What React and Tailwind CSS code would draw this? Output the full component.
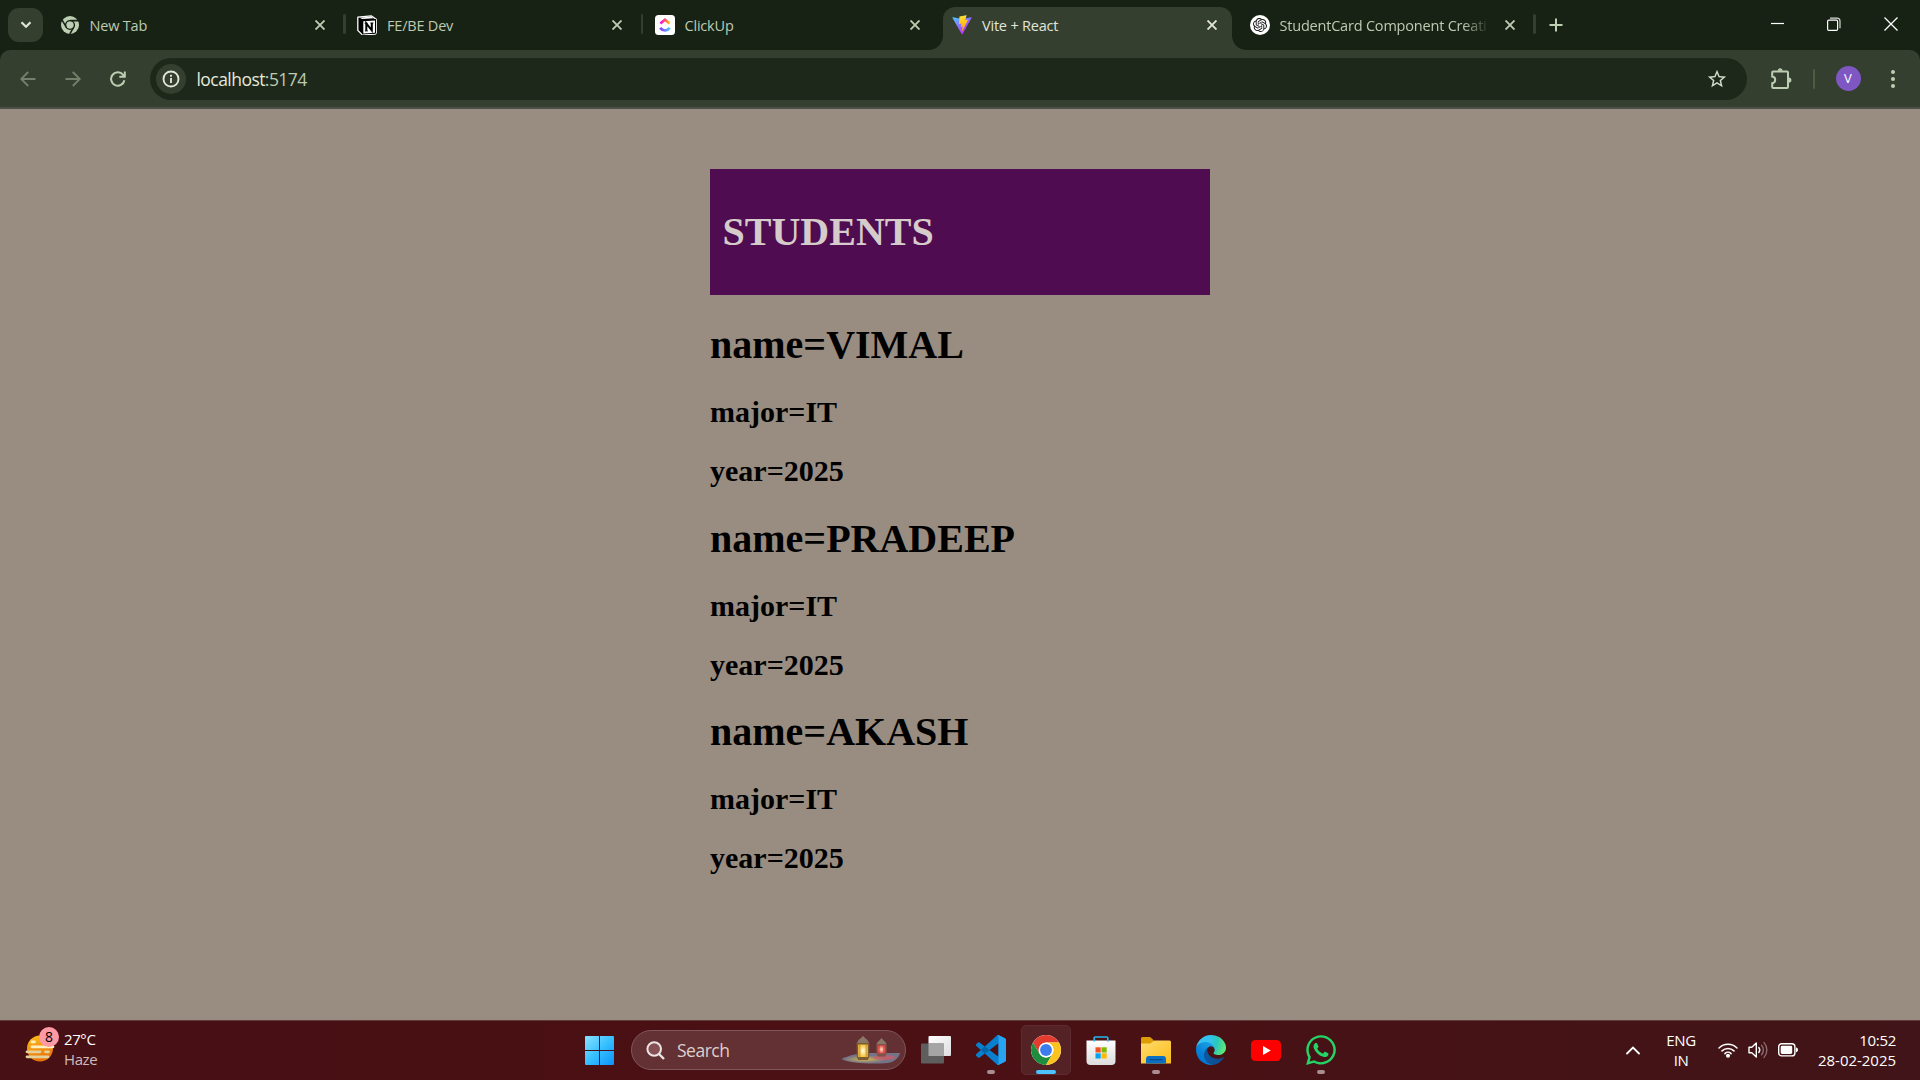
import React from "react";
import { SiOpenai } from "react-icons/si";
import { FaWhatsapp } from "react-icons/fa";

const ChromeMono = () => (
  <svg width="18" height="18" viewBox="0 0 48 48">
    <circle cx="24" cy="24" r="24" fill="#bccfb2" />
    <circle cx="24" cy="24" r="11.5" fill="none" stroke="#182214" strokeWidth="4.2" />
    <path d="M24 12.400h22M14 29.800 3 10.800M34 29.800 23.500 48" stroke="#182214" strokeWidth="4.200" />
    <circle cx="24" cy="24" r="9.200" fill="#bccfb2" />
  </svg>
);

const Notion = () => (
  <svg width="20" height="20" viewBox="0 0 20 20">
    <path d="M.8 2.200 14.200.8l5 3.400v13.800l-1.200 1.200-12.800.5L.8 15.400z" fill="#000" stroke="#fff" strokeWidth="1.300" strokeLinejoin="round" />
    <path d="M5.200 4.800 19 4v14.500l-13.800.9z" fill="#000" />
    <path d="M2.400 2.700 14 1.600l2.800 1.700-11.400.7z" fill="#fff" />
    <path d="M6.300 6.200 18 5.500v12.200l-11.700.7z" fill="#fff" />
    <path d="M9.300 15.800V8.400l5.500 7V8" fill="none" stroke="#000" strokeWidth="2" />
    <path d="M7.700 8.200h2.800M13.400 8h3M7.900 15.900h2.900" stroke="#000" strokeWidth="1" />
  </svg>
);

const ClickUp = () => (
  <svg width="20" height="20" viewBox="0 0 20 20">
    <defs>
      <linearGradient id="cuA" x1="0" x2="1"><stop stopColor="#ff02f0" /><stop offset=".5" stopColor="#ff4f6e" /><stop offset="1" stopColor="#ffc800" /></linearGradient>
      <linearGradient id="cuB" x1="0" x2="1"><stop stopColor="#8930fd" /><stop offset="1" stopColor="#49ccf9" /></linearGradient>
    </defs>
    <rect width="20" height="20" rx="3.5" fill="#fff" />
    <path d="M5.4 8.6 10 4.7l4.6 3.9" fill="none" stroke="url(#cuA)" strokeWidth="2.6" />
    <path d="M5.2 12.9c2.6 3.4 7 3.4 9.6 0" fill="none" stroke="url(#cuB)" strokeWidth="2.6" />
  </svg>
);

const Vite = () => (
  <svg width="20" height="20" viewBox="0 0 410 404">
    <defs>
      <linearGradient id="vA" x1="6" y1="33" x2="235" y2="344" gradientUnits="userSpaceOnUse"><stop stopColor="#41D1FF" /><stop offset="1" stopColor="#BD34FE" /></linearGradient>
      <linearGradient id="vB" x1="194.651" y1="8.818" x2="236.076" y2="292.989" gradientUnits="userSpaceOnUse"><stop stopColor="#FFEA83" /><stop offset=".0833" stopColor="#FFDD35" /><stop offset="1" stopColor="#FFA800" /></linearGradient>
    </defs>
    <path fill="url(#vA)" d="M399.641 59.5246L215.643 388.545C211.844 395.338 202.084 395.378 198.228 388.618L10.5817 59.5563C6.38087 52.1896 12.6802 43.2665 21.0281 44.7586L205.223 77.6824C206.398 77.8924 207.601 77.8904 208.776 77.6763L389.119 44.8058C397.439 43.2894 403.768 52.1434 399.641 59.5246Z" />
    <path fill="url(#vB)" d="M292.965 1.5744L156.801 28.2552C154.563 28.6937 152.906 30.5903 152.771 32.8664L144.395 174.33C144.198 177.662 147.258 180.248 150.51 179.498L188.42 170.749C191.967 169.931 195.172 173.055 194.443 176.622L183.18 231.775C182.422 235.487 185.907 238.661 189.532 237.56L212.947 230.446C216.577 229.344 220.065 232.527 219.297 236.242L201.398 322.875C200.278 328.294 207.486 331.249 210.492 326.603L212.5 323.5L323.454 102.072C325.312 98.3645 322.108 94.137 318.036 94.9228L279.014 102.454C275.347 103.161 272.227 99.746 273.262 96.1583L298.731 7.86689C299.767 4.27314 296.636 0.855181 292.965 1.5744Z" />
  </svg>
);

const OpenAi = () => (
  <span className="flex h-5 w-5 items-center justify-center rounded-full bg-white">
    <SiOpenai size={14} color="#111" />
  </span>
);

const tabs = [
  { title: "New Tab", icon: <ChromeMono />, sep: true },
  { title: "FE/BE Dev", icon: <Notion />, sep: true },
  { title: "ClickUp", icon: <ClickUp /> },
  { title: "Vite + React", icon: <Vite />, active: true },
  { title: "StudentCard Component Creati", icon: <OpenAi />, sep: true, fade: true },
];

function Tab({ title, icon, active, sep, fade }) {
  return (
    <div className="flex h-[43px] w-[297.5px] shrink-0">
      <div className={`relative flex h-full w-[289px] items-center rounded-t-[12px] pb-[8px] pl-[9px] ${active ? "bg-[#343f2f] text-[#e1e5d8]" : "text-[#bccbb2]"}`}>
        {active && (
          <>
            <span className="absolute bottom-0 -left-[14px] h-[14px] w-[14px] bg-[radial-gradient(circle_at_0_0,transparent_13.5px,#343f2f_14.2px)]" />
            <span className="absolute bottom-0 -right-[14px] h-[14px] w-[14px] bg-[radial-gradient(circle_at_100%_0,transparent_13.5px,#343f2f_14.2px)]" />
          </>
        )}
        <span className="flex h-5 w-5 shrink-0 items-center justify-center">{icon}</span>
        <span className={`ml-[10px] w-[210px] pt-[2px] text-[14.5px] leading-5 tracking-[-0.2px] whitespace-nowrap ${fade ? "[mask-image:linear-gradient(to_right,#000_183px,transparent_210px)]" : ""}`}>
          {title}
        </span>
        <svg className="ml-[15px] shrink-0" width="10" height="10" viewBox="0 0 10 10" fill="none" stroke="currentColor" strokeWidth="1.9">
          <path d="M.5.5l9 9M9.5.5l-9 9" />
        </svg>
      </div>
      {sep && <span className="mt-[7px] ml-[3.5px] h-5 w-[2.5px] rounded-full bg-[#343f2f]" />}
    </div>
  );
}

function TabStrip() {
  return (
    <div className="flex h-[50px] bg-[#182214]">
      <div className="mt-2 ml-2 flex h-[34px] w-[35px] items-center justify-center rounded-[11px] bg-[#343f2f]">
        <svg width="12" height="8" viewBox="0 0 12 8" fill="none" stroke="#e1e5d8" strokeWidth="2.2"><path d="M1.5 1.3 6 5.8l4.5-4.5" /></svg>
      </div>
      <div className="mt-[7px] ml-[7.5px] flex">
        {tabs.map((t) => <Tab key={t.title} {...t} />)}
      </div>
      <svg className="mt-[18px] ml-[11px]" width="14" height="14" viewBox="0 0 14 14" stroke="#bccfb2" strokeWidth="2"><path d="M7 .5v13M.5 7h13" /></svg>
      <div className="ml-auto flex pt-[17px] pr-[22px]">
        <svg width="14" height="14" viewBox="0 0 14 14"><path d="M0 6.500h13" stroke="#fff" strokeWidth="1.2" /></svg>
        <svg className="ml-[42px]" width="14" height="14" viewBox="0 0 14 14" fill="none">
          <path d="M3 1.2h7a3 3 0 0 1 3 3v7" stroke="#d5d8d3" strokeWidth="1.2" />
          <rect x=".6" y="3.2" width="10" height="10.2" rx="1.2" stroke="#fff" strokeWidth="1.2" />
        </svg>
        <svg className="ml-[43px]" width="14" height="14" viewBox="0 0 14 14" stroke="#fff" strokeWidth="1.3"><path d="M.5.5l13 13M13.5.5l-13 13" /></svg>
      </div>
    </div>
  );
}

function Toolbar() {
  return (
    <div className="h-[59px] bg-[#182214]">
      <div className="flex h-[59px] items-center rounded-t-[10px] border-b-2 border-[#4a5146] bg-[#343f2f]">
        <div className="ml-[5px] flex w-[45px] justify-center">
          <svg width="16" height="16" viewBox="0 0 16 16" fill="none" stroke="#75806c" strokeWidth="1.8"><path d="M15.5 8H1.5M8.2 1 1.2 8l7 7" /></svg>
        </div>
        <div className="flex w-[45px] justify-center">
          <svg width="16" height="16" viewBox="0 0 16 16" fill="none" stroke="#75806c" strokeWidth="1.8"><path d="M.5 8h14M7.8 1l7 7-7 7" /></svg>
        </div>
        <div className="flex w-[45px] justify-center">
          <svg width="16" height="16" viewBox="0 0 16 16" fill="none" stroke="#bccfb2" strokeWidth="2"><path d="M14.4 9.2A6.7 6.7 0 1 1 13.2 4l1 1.2M14.8.5v5.3H9.3" /></svg>
        </div>
        <div className="ml-[10px] flex h-[42px] w-[1597px] items-center rounded-full bg-[#1e281a] pl-[6px]">
          <div className="flex h-[30px] w-[30px] items-center justify-center rounded-full bg-[#343f2f]">
            <svg width="18" height="18" viewBox="0 0 18 18" fill="none" stroke="#e1e5d8" strokeWidth="1.9"><circle cx="9" cy="9" r="7.5" /><path d="M9 8v5M9 4.8v1.9" /></svg>
          </div>
          <span className="ml-[10.5px] pt-px text-[17.5px] leading-6 tracking-[-0.55px] text-[#e3e8dc]">localhost<span className="text-[#bccbb2]">:5174</span></span>
          <svg className="mr-[19px] ml-auto" width="22" height="22" viewBox="0 0 24 24" fill="#d3dbca">
            <path d="M22 9.24l-7.19-.62L12 2 9.19 8.63 2 9.24l5.46 4.73L5.82 21 12 17.27 18.18 21l-1.63-7.03L22 9.24zM12 15.4l-3.76 2.27 1-4.28-3.32-2.88 4.38-.38L12 6.1l1.71 4.04 4.38.38-3.32 2.88 1 4.28L12 15.4z" />
          </svg>
        </div>
        <div className="ml-[14px] flex w-10 justify-center">
          <svg width="21" height="22" viewBox="0 0 21 22">
            <path d="M2.200 3.500H16a1 1 0 0 1 1 1V19a1 1 0 0 1-1 1H2.200a1 1 0 0 1-1-1v-3.800c4-.4 4-6.300 0-6.700v-4a1 1 0 0 1 1-1z" fill="none" stroke="#bccfb2" strokeWidth="2" />
            <path d="M6.700 2.700a2.500 2.500 0 0 1 5 0zM17.800 9.400a2.600 2.600 0 0 1 0 5.200z" fill="#bccfb2" />
          </svg>
        </div>
        <span className="ml-[11.5px] h-5 w-[2px] rounded-full bg-[#4d5d45]" />
        <span className="ml-[21px] flex h-[25px] w-[25px] items-center justify-center rounded-full bg-[#7e57c2] text-[13px] text-white">V</span>
        <svg className="ml-[29px]" width="6" height="20" viewBox="0 0 6 20" fill="#bccfb2"><circle cx="3" cy="3" r="2" /><circle cx="3" cy="10" r="2" /><circle cx="3" cy="17" r="2" /></svg>
      </div>
    </div>
  );
}

const students = [
  { name: "VIMAL", major: "IT", year: "2025" },
  { name: "PRADEEP", major: "IT", year: "2025" },
  { name: "AKASH", major: "IT", year: "2025" },
];

function Page() {
  return (
    <main className="h-[911px] bg-[#998c80] pt-[60px] font-['Liberation_Serif',serif] font-bold">
      <div className="mx-auto w-[500px] text-black">
        <h1 className="h-[126px] bg-[#500c50] px-[12.5px] pt-[40px] text-[40px] leading-[46px] text-[#d6cbcb]">STUDENTS</h1>
        {students.map((s) => (
          <section key={s.name} className="h-[193.5px] pt-[27px]">
            <h1 className="text-[40px] leading-[46px]">name={s.name}</h1>
            <h2 className="mt-[27px] text-[30px] leading-[34px]">major={s.major}</h2>
            <h2 className="mt-[25px] text-[30px] leading-[34px]">year={s.year}</h2>
          </section>
        ))}
      </div>
    </main>
  );
}

const TaskView = () => (
  <svg width="30" height="28" viewBox="0 0 30 28">
    <defs><linearGradient id="tv" x1="0" x2="1" y2="1"><stop stopColor="#fff" /><stop offset="1" stopColor="#ddd" /></linearGradient></defs>
    <rect x="7.500" y="0" width="22.500" height="20" rx="1" fill="url(#tv)" />
    <rect x="0" y="7.500" width="23" height="20" rx="1" fill="#5e5e5e" />
    <path d="M7.500 7.500H22a1 1 0 0 1 1 1V20H7.500z" fill="#a5a5a5" />
  </svg>
);

const VsCode = () => (
  <svg width="30" height="30" viewBox="0 0 24 24">
    <path fill="#0a7fce" d="M23.15 2.587L18.21.21a1.494 1.494 0 0 0-1.705.29l-9.46 8.63-4.12-3.128a.999.999 0 0 0-1.276.057L.327 7.261A1 1 0 0 0 .326 8.74L3.899 12 .326 15.26a1 1 0 0 0 .001 1.479L1.65 17.94a.999.999 0 0 0 1.276.057l4.12-3.128 9.46 8.63a1.492 1.492 0 0 0 1.704.29l4.942-2.377A1.5 1.5 0 0 0 24 20.06V3.939a1.5 1.5 0 0 0-.85-1.352zm-5.146 14.861L10.826 12l7.178-5.448v10.896z" />
    <path fill="#0065a9" d="M7.045 9.130 10.826 12l-3.780 2.870L3.899 12z" />
    <path fill="#27a5f3" d="M17.100.1c.5.500.904 1 .904 1.400v21c0 .5-.4 1-.904 1.400.4.100.800 0 1.110-.110l4.942-2.377A1.500 1.500 0 0 0 24 20.060V3.939a1.500 1.500 0 0 0-.850-1.352L18.210.210c-.3-.150-.7-.2-1.110-.110z" />
  </svg>
);

const Chrome = () => (
  <svg width="30" height="30" viewBox="0 0 48 48">
    <circle cx="24" cy="24" r="24" fill="#fff" />
    <path fill="#e33b2e" d="M24 12h20.780A24 24 0 0 0 3.220 12L13.610 30 24 12z" />
    <path fill="#1e8e3e" d="M34.390 30 24 48A24 24 0 0 1 3.220 12L13.610 30a12 12 0 0 0 20.780 0z" />
    <path fill="#fcc31e" d="M34.390 30 24 48a24 24 0 0 0 20.780-36H24a12 12 0 0 1 10.390 18z" />
    <circle cx="24" cy="24" r="12" fill="#fff" />
    <circle cx="24" cy="24" r="9.500" fill="#3b7ded" />
  </svg>
);

const Store = () => (
  <svg width="30" height="30" viewBox="0 0 30 30">
    <defs><linearGradient id="st" x2="0" y2="1"><stop stopColor="#fff" /><stop offset="1" stopColor="#dcdcdc" /></linearGradient></defs>
    <path d="M.5 5.500h29V26a4 4 0 0 1-4 4h-21a4 4 0 0 1-4-4z" fill="url(#st)" />
    <path d="M8.200 6.500V3a1 1 0 0 1 1-1h11.600a1 1 0 0 1 1 1v3.500" fill="none" stroke="#22b8ee" strokeWidth="1.700" />
    <path fill="#f25022" d="M9.500 12.300h5.200v5.200H9.500z" /><path fill="#7fba00" d="M15.500 12.300h5.200v5.200h-5.200z" />
    <path fill="#00a4ef" d="M9.500 18.300h5.200v5.200H9.500z" /><path fill="#ffb900" d="M15.500 18.300h5.200v5.200h-5.200z" />
  </svg>
);

const Folder = () => (
  <svg width="30" height="27" viewBox="0 0 30 27">
    <defs><linearGradient id="fo" x2="1" y2="1"><stop stopColor="#ffdc6e" /><stop offset="1" stopColor="#fcbc19" /></linearGradient></defs>
    <path d="M0 1.500A1.500 1.500 0 0 1 1.500 0H9l3.500 3v4H0z" fill="#dd9d06" />
    <path d="M0 6.500h9.500L13 3.500h15.500A1.500 1.500 0 0 1 30 5v21.500H0z" fill="url(#fo)" />
    <path d="M5 26.500V22a3 3 0 0 1 3-3h14a3 3 0 0 1 3 3v4.500z" fill="#0b6fc4" />
    <path d="M8.500 22.700h13" stroke="#0a4a8c" strokeWidth="1.200" />
  </svg>
);

const Edge = () => (
  <svg width="30" height="30" viewBox="0 0 256 256">
    <defs>
      <linearGradient id="eA" x1="58" y1="177" x2="237" y2="177" gradientUnits="userSpaceOnUse"><stop stopColor="#0c59a4" /><stop offset="1" stopColor="#114a8b" /></linearGradient>
      <linearGradient id="eB" x1="152" y1="75" x2="46" y2="220" gradientUnits="userSpaceOnUse"><stop stopColor="#1b9de2" /><stop offset=".3" stopColor="#1595df" /><stop offset=".7" stopColor="#0680d7" /><stop offset="1" stopColor="#0078d4" /></linearGradient>
      <radialGradient id="eC" cx="30" cy="50" r="240" gradientUnits="userSpaceOnUse"><stop stopColor="#35c1f1" /><stop offset=".4" stopColor="#34c1ed" /><stop offset=".65" stopColor="#2ac7bb" /><stop offset="1" stopColor="#66eb6e" /></radialGradient>
    </defs>
    <g transform="translate(-4.630 -4.920)">
      <path fill="url(#eA)" d="M235.68 195.46a93.73 93.73 0 0 1-10.54 4.71 101.87 101.87 0 0 1-35.9 6.46c-47.32 0-88.54-32.55-88.54-74.32A31.48 31.48 0 0 1 117.13 105c-42.8 1.8-53.8 46.4-53.8 72.53 0 73.88 68.09 81.37 82.76 81.37 7.91 0 19.84-2.3 27-4.56l1.31-.44a128.34 128.34 0 0 0 66.6-52.8 4 4 0 0 0-5.32-5.64Z" />
      <path fill="url(#eB)" d="M110.34 246.34A79.2 79.2 0 0 1 87.6 225a80.72 80.72 0 0 1 29.53-120c3.12-1.47 8.45-4.13 15.54-4a32.35 32.35 0 0 1 25.69 13 31.88 31.88 0 0 1 6.36 18.66c0-.21 24.46-79.6-80-79.6-43.9 0-80 41.66-80 78.21a130.15 130.15 0 0 0 12.11 56 128 128 0 0 0 156.38 67.11 75.55 75.55 0 0 1-62.78-8Z" />
      <path fill="url(#eC)" d="M156.94 153.78c-.81 1.05-3.3 2.5-3.3 5.66 0 2.61 1.7 5.12 4.72 7.23 14.38 10 41.49 8.68 41.56 8.68a59.56 59.56 0 0 0 30.27-8.35A61.38 61.38 0 0 0 260.62 114c.26-22.41-8-37.31-11.34-43.91C228.09 28.76 182.35 4.92 132.61 4.92a128 128 0 0 0-128 126.2c.48-36.54 36.8-66.05 80-66.05 3.5 0 23.46.34 42 10.07 16.34 8.58 24.9 18.94 30.85 29.21 6.18 10.67 7.28 24.15 7.28 29.52s-2.74 13.33-7.8 19.91Z" />
    </g>
  </svg>
);

const YouTube = () => (
  <svg width="30" height="21" viewBox="0 0 30 21">
    <rect width="30" height="21" rx="4.500" fill="#f00" /><path d="M12 6v9l7.800-4.500z" fill="#fff" />
  </svg>
);

const Lanterns = () => (
  <svg width="60" height="30" viewBox="0 0 60 30">
    <defs>
      <radialGradient id="lA" cx=".4" cy=".6" r=".45"><stop stopColor="#d8b84f" /><stop offset=".8" stopColor="#747488" /></radialGradient>
      <radialGradient id="lY"><stop stopColor="#fffbe0" /><stop offset="1" stopColor="#f7c43a" /></radialGradient>
      <radialGradient id="lR"><stop stopColor="#ffe0c0" /><stop offset="1" stopColor="#e24a4a" /></radialGradient>
    </defs>
    <path d="M.5 24c8-4 18-6 28-6h30.500c-1 5-6 9-12 10-16 1-36 1-46.500-4z" fill="url(#lA)" />
    <ellipse cx="43" cy="22.500" rx="11" ry="2.500" fill="#d65a62" opacity=".7" />
    <path d="M22 .5c1 2.500 5 3.500 6 7.500H16c1-4 5-5 6-7.500z" fill="#8a7768" />
    <path d="M15.500 8h13l-.3 14-1.300 3H17.200l-1.300-3z" fill="#7a5a34" />
    <path d="M17.200 9.500h9.600v12.500h-9.600z" fill="url(#lY)" /><path d="M18.800 9v14M25.200 9v14" stroke="#a77b2c" strokeWidth=".7" />
    <path d="M40.500 3c1 2 4 3 5 6h-10c1-3 4-4 5-6z" fill="#8a7768" />
    <path d="M35.300 9h10.400l-.2 10-1.300 2.500h-7.400L35.500 19z" fill="#7d544a" />
    <path d="M36.800 10.300h7.400v8.200h-7.400z" fill="url(#lR)" /><path d="M38.200 10v9M42.800 10v9" stroke="#a84838" strokeWidth=".6" />
  </svg>
);

const apps = [
  { id: "taskview", icon: <TaskView /> },
  { id: "vscode", icon: <VsCode />, running: true },
  { id: "chrome", icon: <Chrome />, active: true },
  { id: "store", icon: <Store /> },
  { id: "folder", icon: <Folder />, running: true },
  { id: "edge", icon: <Edge /> },
  { id: "youtube", icon: <YouTube /> },
  { id: "whatsapp", icon: <FaWhatsapp size={34} color="#25d366" />, running: true },
];

function Taskbar() {
  return (
    <footer className="flex h-[60px] border-t border-[#5f3a38] bg-linear-to-r from-[#471014] via-[#4b1013] to-[#401418] pb-px text-[15px] text-white">
      <div className="flex w-[571.5px] pt-[6px] pl-[25px]">
        <div className="relative h-[35px] w-[35px]">
          <svg width="35" height="35" viewBox="0 0 35 35">
            <defs><linearGradient id="sun" x2=".3" y2="1"><stop stopColor="#ffc21a" /><stop offset="1" stopColor="#e8720c" /></linearGradient></defs>
            <circle cx="15" cy="21.500" r="13" fill="url(#sun)" />
            <path d="M7 14.800h2.500M7 19.800h21" stroke="#fff0c0" strokeWidth="2.800" strokeLinecap="round" />
            <path d="M2 24.800h13M20.500 24.800h3M2 29.800h21" stroke="#e3d09a" strokeWidth="2.800" strokeLinecap="round" />
          </svg>
          <span className="absolute top-0 left-[14px] flex h-5 w-5 items-center justify-center rounded-full bg-[#ff99a4] text-[14px] leading-5 text-black">8</span>
        </div>
        <div className="ml-[4px] pt-[2px] leading-5 tracking-[-0.4px]">
          <div>27°C</div>
          <div className="text-[#cfbcbd]">Haze</div>
        </div>
      </div>
      <div className="flex items-center">
        <div className="flex w-[55px] justify-center">
          <svg width="29" height="29" viewBox="0 0 29 29">
            <defs><linearGradient id="win" x2="1" y2="1"><stop stopColor="#8be2ff" /><stop offset=".5" stopColor="#36c0ff" /><stop offset="1" stopColor="#0c92f8" /></linearGradient></defs>
            <path fill="url(#win)" d="M1 0h13v14H0V1a1 1 0 0 1 1-1zM15 0h13a1 1 0 0 1 1 1v13H15zM0 15h14v14H1a1 1 0 0 1-1-1zM15 15h14v13a1 1 0 0 1-1 1H15z" />
          </svg>
        </div>
        <div className="ml-[4.5px] flex h-10 w-[275px] items-center rounded-full border border-[#80565a] bg-[#633133] pl-[14px]">
          <svg width="19" height="19" viewBox="0 0 19 19" fill="#854f54" stroke="#ece4e4" strokeWidth="2"><circle cx="8.200" cy="8" r="6.800" /><path d="M13 13l5 5" strokeWidth="2.400" /></svg>
          <span className="ml-[12px] text-[17.500px] leading-6 tracking-[-0.500px] text-[#dccfcf]">Search</span>
          <span className="mr-[4px] ml-auto"><Lanterns /></span>
        </div>
        <div className="ml-[2.500px] flex">
          {apps.map((a) => (
            <div key={a.id} className="flex w-[55px] justify-center">
              <div className={`relative flex h-[50px] w-[50px] items-center justify-center rounded-[5px] border ${a.active ? "border-[#5e2c30] bg-[#542125]" : "border-transparent"}`}>
                {a.icon}
                {a.running && <span className="absolute bottom-0 h-1 w-2 rounded-full bg-[#a98d90]" />}
                {a.active && <span className="absolute bottom-0 h-1 w-5 rounded-full bg-[#4cc2ff]" />}
              </div>
            </div>
          ))}
        </div>
      </div>
      <div className="ml-auto flex items-center pr-[24px]">
        <svg width="14" height="9" viewBox="0 0 14 9" fill="none" stroke="#fff" strokeWidth="1.800" strokeLinecap="round"><path d="M1 7.500 7 1.500l6 6" /></svg>
        <div className="ml-[26px] w-[30px] text-center leading-5 tracking-[-0.400px]">ENG<br />IN</div>
        <svg className="ml-[22px]" width="20" height="16" viewBox="0 0 20 16" fill="none" stroke="#fff" strokeWidth="1.500" strokeLinecap="round">
          <path d="M1 6a12.800 12.800 0 0 1 18 0M4 8.900a8.500 8.500 0 0 1 12 0M6.900 11.600a4.400 4.400 0 0 1 6.200 0" /><circle cx="10" cy="13.700" r="1.300" fill="#fff" />
        </svg>
        <svg className="ml-[10px]" width="20" height="18" viewBox="0 0 20 18" fill="none" stroke="#fff" strokeWidth="1.400" strokeLinecap="round" strokeLinejoin="round">
          <path d="M1 6.300v5.400h2.800L8.300 16V2L3.800 6.300zM10.800 6.500a4 4 0 0 1 0 5" /><path d="M13.500 4.200a7 7 0 0 1 0 9.600M16 1.600a11 11 0 0 1 0 14.800" stroke="#8d6c6f" />
        </svg>
        <svg className="ml-[10px]" width="20" height="14" viewBox="0 0 20 14" fill="none">
          <rect x=".7" y=".7" width="16.200" height="12.200" rx="3" stroke="#fff" strokeWidth="1.400" /><rect x="2.700" y="2.700" width="11.500" height="8.200" rx="1.400" fill="#fff" /><path d="M18 4.500c1.300.2 2 1 2 2.300s-.7 2.200-2 2.400z" fill="#fff" />
        </svg>
        <div className="ml-[12px] w-[86px] text-right leading-5 whitespace-nowrap"><div className="tracking-[-0.300px]">10:52</div><div className="tracking-[-0.030px]">28-02-2025</div></div>
      </div>
    </footer>
  );
}

export default function App() {
  return (
    <div className="h-[1080px] w-[1920px] overflow-hidden font-['Open_Sans','Noto_Sans',sans-serif]">
      <TabStrip />
      <Toolbar />
      <Page />
      <Taskbar />
    </div>
  );
}
